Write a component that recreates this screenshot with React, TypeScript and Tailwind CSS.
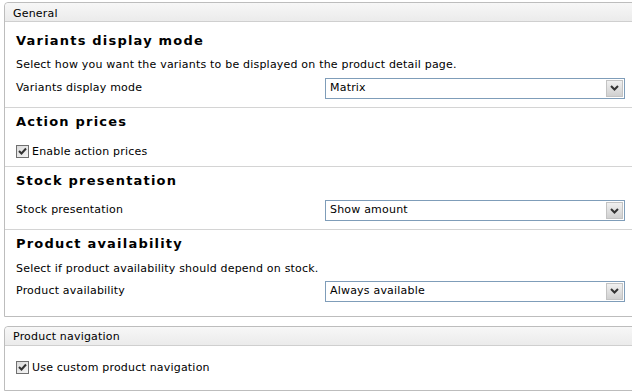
import React from 'react';

const font = { fontFamily: '"DejaVu Sans", Verdana, sans-serif' };

const Select: React.FC<{ value: string }> = ({ value }) => (
  <div className="flex h-[21px] w-[300px] items-center border border-[#7f9db9] bg-white pl-[4px] pr-[1px]">
    <span className="flex-1 text-[11px] tracking-[0.2px] text-black">{value}</span>
    <div className="flex h-[17px] w-[17px] items-center justify-center border border-[#c3c3c3] bg-gradient-to-b from-[#f0f0f0] to-[#d0d0d0]">
      <svg width="9" height="6" viewBox="0 0 9 6">
        <path d="M1 1 L4.5 4.5 L8 1" stroke="#333" strokeWidth="2" fill="none" />
      </svg>
    </div>
  </div>
);

const Checkbox: React.FC<{ label: string }> = ({ label }) => (
  <label className="flex items-center gap-[3px] text-[11px] tracking-[0.2px] text-black">
    <span className="flex h-[13px] w-[13px] items-center justify-center border border-[#707070] bg-gradient-to-br from-[#dcdcdc] to-[#f4f4f4]">
      <svg width="9" height="9" viewBox="0 0 9 9">
        <path d="M1 4 L3.5 6.5 L8 1.5" stroke="#333" strokeWidth="2" fill="none" />
      </svg>
    </span>
    {label}
  </label>
);

const Section: React.FC<{ title: string; children: React.ReactNode; first?: boolean; last?: boolean }> = ({
  title,
  children,
  first,
  last,
}) => (
  <div className={last ? 'px-[11px]' : 'border-b border-[#d4d4d4] px-[11px]'}>
    <h2
      className={
        first
          ? 'pt-[10px] text-[13px] font-bold leading-[18px] tracking-[1.2px] text-black'
          : 'pt-[5px] text-[13px] font-bold leading-[18px] tracking-[1.2px] text-black'
      }
    >
      {title}
    </h2>
    {children}
  </div>
);

const Row: React.FC<{ label: string; value: string }> = ({ label, value }) => (
  <div className="flex items-center pb-[8px]">
    <div className="w-[309px] text-[11px] tracking-[0.2px] text-black">{label}</div>
    <Select value={value} />
  </div>
);

const Panel: React.FC<{ title: string; children: React.ReactNode }> = ({ title, children }) => (
  <div className="ml-[4px] w-[640px] rounded-tl-[4px] border border-[#bdbdbd]">
    <div className="flex h-[19px] items-center rounded-tl-[4px] border-b border-[#cfcfcf] bg-gradient-to-b from-[#f7f7f7] to-[#ebebeb] px-[8px] pt-[4px] text-[11px] tracking-[0.2px] text-black">
      {title}
    </div>
    {children}
  </div>
);

export default function App() {
  return (
    <div className="h-[392px] w-[632px] overflow-hidden bg-white pt-[2px]" style={font}>
      <Panel title="General">
        <Section title="Variants display mode" first>
          <p className="pt-[7px] pb-[4px] text-[11px] tracking-[0.2px] text-black">
            Select how you want the variants to be displayed on the product detail page.
          </p>
          <Row label="Variants display mode" value="Matrix" />
        </Section>
        <Section title="Action prices">
          <div className="pt-[13px] pb-[6px]">
            <Checkbox label="Enable action prices" />
          </div>
        </Section>
        <Section title="Stock presentation">
          <div className="pt-[10px]">
            <Row label="Stock presentation" value="Show amount" />
          </div>
        </Section>
        <Section title="Product availability" last>
          <p className="pt-[8px] pb-[3px] text-[11px] tracking-[0.2px] text-black">
            Select if product availability should depend on stock.
          </p>
          <Row label="Product availability" value="Always available" />
          <div className="h-[6px]" />
        </Section>
      </Panel>
      <div className="h-[9px]" />
      <Panel title="Product navigation">
        <div className="px-[11px] pt-[14px] pb-[14px]">
          <Checkbox label="Use custom product navigation" />
        </div>
      </Panel>
    </div>
  );
}
